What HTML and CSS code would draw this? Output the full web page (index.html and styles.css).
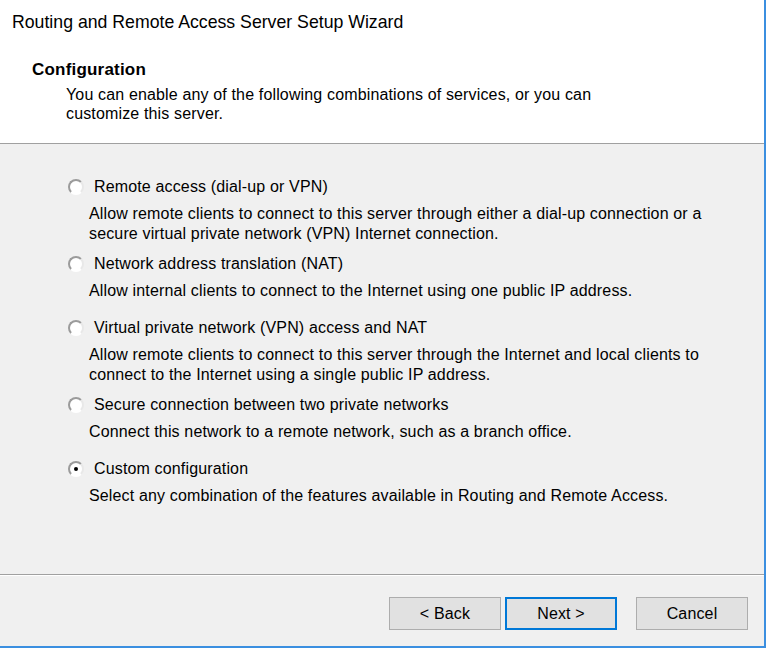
FILE: index.html
```html
<!DOCTYPE html>
<html lang="en">
<head>
  <meta charset="UTF-8" />
  <title>Routing and Remote Access Server Setup Wizard</title>
  <link rel="stylesheet" href="styles.css">
</head>
<body>
  <div class="wizard">
    <div class="wizard-header">
      <div class="window-title">Routing and Remote Access Server Setup Wizard</div>
      <div class="page-title">Configuration</div>
      <div class="page-subtitle">You can enable any of the following combinations of services, or you can<br>customize this server.</div>
    </div>

    <div class="wizard-body">
      <label class="option">
        <span class="option-label"><input type="radio" name="config"> Remote access (dial-up or VPN)</span>
        <span class="option-desc">Allow remote clients to connect to this server through either a dial-up connection or a<br>secure virtual private network (VPN) Internet connection.</span>
      </label>
      <label class="option">
        <span class="option-label"><input type="radio" name="config"> Network address translation (NAT)</span>
        <span class="option-desc">Allow internal clients to connect to the Internet using one public IP address.</span>
      </label>
      <label class="option spaced">
        <span class="option-label"><input type="radio" name="config"> Virtual private network (VPN) access and NAT</span>
        <span class="option-desc">Allow remote clients to connect to this server through the Internet and local clients to<br>connect to the Internet using a single public IP address.</span>
      </label>
      <label class="option">
        <span class="option-label"><input type="radio" name="config"> Secure connection between two private networks</span>
        <span class="option-desc">Connect this network to a remote network, such as a branch office.</span>
      </label>
      <label class="option spaced">
        <span class="option-label"><input type="radio" name="config" checked> Custom configuration</span>
        <span class="option-desc">Select any combination of the features available in Routing and Remote Access.</span>
      </label>
    </div>

    <div class="wizard-footer">
      <button class="btn">&lt; Back</button>
      <button class="btn btn-default">Next &gt;</button>
      <button class="btn btn-cancel">Cancel</button>
    </div>
  </div>
</body>
</html>
```

FILE: styles.css
```css
body {
  margin: 0;
  background-color: #ffffff;
  font-family: 'Liberation Sans', Arial, sans-serif;
  font-size: 16px;
  letter-spacing: 0.15px;
  color: #000000;
}

.wizard {
  width: 764px;
  height: 646px;
  background-color: #f0f0f0;
  border-right: 2px solid #3b8fe0;
  border-bottom: 2px solid #3b8fe0;
  display: flex;
  flex-direction: column;
}

.wizard-header {
  height: 144px;
  box-sizing: border-box;
  padding-top: 12px;
  background-color: #ffffff;
  border-bottom: 1px solid #a0a0a0;
}

.window-title {
  margin-left: 12px;
  font-size: 17.7px;
  letter-spacing: 0;
  line-height: 20px;
}

.page-title {
  margin: 29px 0 0 32px;
  font-size: 17px;
  font-weight: bold;
  letter-spacing: 0.2px;
  line-height: 18px;
}

.page-subtitle {
  margin: 6px 0 0 66px;
  line-height: 19px;
  white-space: nowrap;
}

.wizard-body {
  flex: 1;
  padding: 33px 0 0 68px;
  display: flex;
  flex-direction: column;
  gap: 10px;
}

.option {
  display: block;
  white-space: nowrap;
}

.option.spaced {
  margin-top: 7px;
}

.option-label {
  display: flex;
  align-items: center;
  gap: 10px;
  line-height: 20px;
}

.option-desc {
  display: block;
  margin: 7px 0 0 21px;
  line-height: 20px;
}

input[type="radio"] {
  appearance: none;
  -webkit-appearance: none;
  margin: 0;
  width: 16px;
  height: 16px;
  border-radius: 50%;
  border: 2px solid;
  border-color: #9b9b9b #e8e8e8 #ffffff #9b9b9b;
  background-color: #ffffff;
  box-sizing: border-box;
  position: relative;
}

input[type="radio"]:checked::after {
  content: "";
  position: absolute;
  left: 4px;
  top: 4px;
  width: 4px;
  height: 4px;
  border-radius: 50%;
  background-color: #000000;
}

.wizard-footer {
  height: 72px;
  box-sizing: border-box;
  border-top: 1px solid #a0a0a0;
  box-shadow: inset 0 1px 0 #ffffff;
  padding: 22px 16px 0 0;
  display: flex;
  justify-content: flex-end;
  align-items: flex-start;
  gap: 4px;
}

.btn {
  width: 112px;
  height: 33px;
  background-color: #e1e1e1;
  border: 1px solid #adadad;
  font-family: inherit;
  font-size: 16px;
  letter-spacing: inherit;
  color: #000000;
  padding: 0;
}

.btn-default {
  border: 2px solid #0078d7;
}

.btn-cancel {
  margin-left: 15px;
}
```
